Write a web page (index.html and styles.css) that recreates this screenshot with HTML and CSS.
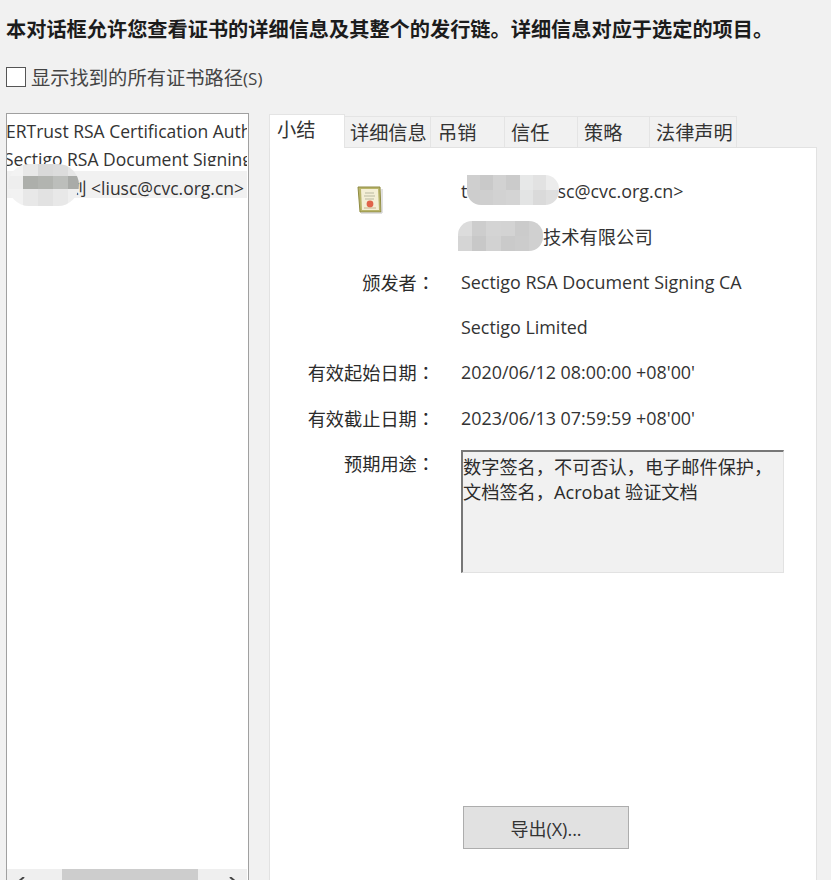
FILE: index.html
```html
<!DOCTYPE html>
<html lang="zh-CN">
<head>
<meta charset="utf-8">
<title>证书查看程序</title>
<link rel="stylesheet" href="styles.css">
</head>
<body>
<div class="dialog">
  <p class="intro">本对话框允许您查看证书的详细信息及其整个的发行链。详细信息对应于选定的项目。</p>
  <label class="check-row"><span class="checkbox"></span><span class="check-text">显示找到的所有证书路径<small>(S)</small></span></label>
  <div class="main">
    <div class="tree">
      <div class="tree-items">
        <div class="tree-item item-one">ERTrust RSA Certification Authority</div>
        <div class="tree-item item-two">Sectigo RSA Document Signing CA</div>
        <div class="tree-item item-selected"><span class="mosaic mosaic-tree"><i></i><i></i><i></i><i></i><i></i><i></i><i></i><i></i><i></i><i></i><i></i><i></i><i></i><i></i><i></i></span><span class="sel-text">刘 &lt;liusc@cvc.org.cn&gt;</span></div>
      </div>
      <div class="hscroll">
        <svg class="arrow arrow-left" viewBox="0 0 12 12" width="12" height="12"><path d="M8 0 L2 5" fill="none" stroke="#444" stroke-width="2"/></svg>
        <div class="thumb"></div>
        <svg class="arrow arrow-right" viewBox="0 0 12 12" width="12" height="12"><path d="M4 0 L10 5" fill="none" stroke="#444" stroke-width="2"/></svg>
      </div>
    </div>
    <div class="details">
      <div class="tabs">
        <div class="tab active">小结</div>
        <div class="tab t2">详细信息</div>
        <div class="tab t3">吊销</div>
        <div class="tab t4">信任</div>
        <div class="tab t5">策略</div>
        <div class="tab t6">法律声明</div>
      </div>
      <div class="panel">
        <svg class="cert" viewBox="0 0 28 30" width="28" height="30">
          <path d="M2 2 H24 L25 27 H4 Z" fill="#b9b56a" stroke="#8f8b42" stroke-width="1"/>
          <path d="M5 4 H22 L23 25 H6 Z" fill="#f4efd6"/>
          <path d="M9 8 H18 M8 11 H19 M9 14 H18" stroke="#b9b9a0" stroke-width="1"/>
          <circle cx="14" cy="19" r="3.4" fill="#e0644a"/>
          <path d="M8 23 H20" stroke="#c9b48e" stroke-width="1"/>
          <path d="M5 28 H26 V4" fill="none" stroke="#c4c4c4" stroke-width="1"/>
        </svg>
        <dl class="fields">
          <dt></dt>
          <dd class="masked"><span class="mosaic mosaic-name"><i></i><i></i><i></i><i></i><i></i><i></i><i></i><i></i><i></i><i></i><i></i><i></i><i></i><i></i></span>t<span class="name-rest">sc@cvc.org.cn&gt;</span></dd>
          <dt></dt>
          <dd class="masked"><span class="mosaic mosaic-org"><i></i><i></i><i></i><i></i><i></i><i></i><i></i><i></i><i></i><i></i><i></i><i></i></span><span class="org-rest">技术有限公司</span></dd>
          <dt>颁发者<span class="colon" lang="zh-Hant">：</span></dt>
          <dd>Sectigo RSA Document Signing CA</dd>
          <dt></dt>
          <dd>Sectigo Limited</dd>
          <dt>有效起始日期<span class="colon" lang="zh-Hant">：</span></dt>
          <dd>2020/06/12 08:00:00 +08'00'</dd>
          <dt>有效截止日期<span class="colon" lang="zh-Hant">：</span></dt>
          <dd>2023/06/13 07:59:59 +08'00'</dd>
          <dt class="usage-label">预期用途<span class="colon" lang="zh-Hant">：</span></dt>
          <dd class="usage-cell"><div class="usage">数字签名，不可否认，电子邮件保护，<br>文档签名，Acrobat 验证文档</div></dd>
        </dl>
        <button class="export" type="button">导出(X)...</button>
      </div>
    </div>
  </div>
</div>
</body>
</html>
```
FILE: styles.css
```css
* { box-sizing: border-box; }
html, body { margin: 0; height: 100%; overflow: hidden; background: #fff; }
body {
  color: #2b2b2b;
  font-family: "Open Sans", "Noto Sans CJK SC", sans-serif;
  font-size: 17.9px;
}
.dialog {
  width: 831px;
  height: 880px;
  background: #f1f1f1;
  padding: 15px 0 0 6px;
  display: flex;
  flex-direction: column;
}
.intro {
  margin: 0;
  font-family: "Noto Sans CJK SC", sans-serif;
  font-size: 20.2px;
  line-height: 28px;
  font-weight: 700;
  color: #1c1c1c;
  white-space: nowrap;
}
.check-row { display: flex; align-items: center; gap: 5px; margin-top: 22px; height: 24px; }
.checkbox { width: 20px; height: 20px; background: #fff; border: 1.5px solid #555; }
.check-text { font-family: "Noto Sans CJK SC", sans-serif; font-size: 19.3px; color: #444; }
.check-text small { font-family: "Open Sans", sans-serif; font-size: 17px; }
.main { display: flex; margin-top: 24px; flex: 1; min-height: 0; }
.tree {
  width: 243px;
  background: #fff;
  border: 1px solid #a0a0a0;
  border-width: 1.5px 1.5px 0 1.5px;
  display: flex;
  flex-direction: column;
  overflow: hidden;
}
.tree-items { flex: 1; padding-top: 3px; overflow: hidden; }
.tree-item { font-size: 17.5px; white-space: nowrap; position: relative; color: #333; }
.item-one { height: 28px; line-height: 28px; margin-left: -1px; margin-right: 1px; overflow: hidden; }
.item-two { height: 21px; line-height: 28px; margin-left: -3px; margin-right: 1px; margin-bottom: 5px; overflow: hidden; }
.item-selected { background: #f1f1f1; height: 27px; line-height: 34px; margin-right: 1px; }
.sel-text { margin-left: 62px; }
.mosaic { position: absolute; display: grid; overflow: hidden; z-index: 1; }
.mosaic i { display: block; }
.mosaic-tree {
  left: 1px; top: -7px; width: 71px; height: 42px;
  grid-template-columns: 15px 15px 15px 15px 11px;
  grid-template-rows: 12px 13px 17px;
  border-radius: 22px;
}
.mosaic-tree i:nth-child(1) { background: #f3f3f3; }
.mosaic-tree i:nth-child(2) { background: #e8e8e8; }
.mosaic-tree i:nth-child(3) { background: #d9d9d9; }
.mosaic-tree i:nth-child(4) { background: #dcdcdc; }
.mosaic-tree i:nth-child(5) { background: #e6e6e6; }
.mosaic-tree i:nth-child(6) { background: #eeeeee; }
.mosaic-tree i:nth-child(7) { background: #adafab; }
.mosaic-tree i:nth-child(8) { background: #b2b4b0; }
.mosaic-tree i:nth-child(9) { background: #bcbebb; }
.mosaic-tree i:nth-child(10) { background: #a9aba8; }
.mosaic-tree i:nth-child(11) { background: #f2f2f2; }
.mosaic-tree i:nth-child(12) { background: #e8e8e8; }
.mosaic-tree i:nth-child(13) { background: #e2e2e2; }
.mosaic-tree i:nth-child(14) { background: #e8e8e8; }
.mosaic-tree i:nth-child(15) { background: #efefef; }
.hscroll {
  height: 11px;
  flex: none;
  background: #efefef;
  display: flex;
  align-items: flex-start;
  justify-content: space-between;
  position: relative;
  margin-right: 1px;
  overflow: hidden;
}
.arrow { display: block; margin-top: 8px; flex: none; }
.arrow-left { margin-left: 9px; }
.arrow-right { margin-right: 9px; }
.thumb { position: absolute; left: 55px; width: 136px; top: 0; bottom: 0; background: #cdcdcd; }
.details { flex: 1; margin-left: 20px; margin-right: 14px; display: flex; flex-direction: column; min-width: 0; }
.tabs { display: flex; align-items: flex-end; height: 34px; flex: none; position: relative; z-index: 2; }
.tab {
  font-family: "Noto Sans CJK SC", sans-serif;
  font-size: 19.2px;
  height: 31px;
  line-height: 30px;
  background: #f1f1f1;
  border: 1px solid #e4e4e4;
  border-left: 0;
  border-bottom: 0;
  color: #333;
  white-space: nowrap;
}
.tab.active { width: 76px; height: 34px; background: #fff; border-left: 1px solid #e4e4e4; margin-bottom: -1px; line-height: 28px; padding-left: 7px; }
.t2 { width: 86px; padding-left: 5px; }
.t3 { width: 74px; padding-left: 7px; }
.t4 { width: 73px; padding-left: 6px; }
.t5 { width: 72px; padding-left: 6px; }
.t6 { width: 87px; padding-left: 6px; }
.panel { flex: 1; background: #fff; border: 1px solid #e2e2e2; border-bottom: 0; position: relative; display: flex; flex-direction: column; min-height: 0; }
.cert { position: absolute; left: 86px; top: 37px; filter: blur(0.3px); }
.fields {
  margin: 20.5px 0 0;
  display: grid;
  grid-template-columns: 165px 1fr;
  grid-auto-rows: 45.3px;
  align-items: center;
}
.fields dt { text-align: right; margin: 0; font-family: "Noto Sans CJK SC", sans-serif; font-size: 18.2px; }
.colon { font-family: "Noto Sans CJK TC", sans-serif; }
.fields dd { margin: 0 0 0 26px; white-space: nowrap; position: relative; color: #333; }
.usage-label { align-self: start; padding-top: 10px; }
.usage-cell { align-self: start; }
.usage {
  width: 323px; height: 123px;
  margin-top: 10px;
  padding: 3px 0 0;
  background: #f1f1f1;
  border-top: 2px solid #777;
  border-left: 2px solid #777;
  border-right: 1px solid #e2e2e2;
  border-bottom: 1px solid #e2e2e2;
  line-height: 25px;
  font-size: 18.2px;
  color: #2b2b2b;
}
.masked { height: 100%; display: flex; align-items: center; }
.mosaic-name { left: 6px; top: 6px; width: 92px; height: 30px; grid-template-columns: repeat(7, 1fr); border-radius: 0 14px 14px 14px; }
.mosaic-name i:nth-child(1) { background: #cfcfcf; } .mosaic-name i:nth-child(2) { background: #c9c9c9; }
.mosaic-name i:nth-child(3) { background: #d2d2d2; } .mosaic-name i:nth-child(4) { background: #cbcbcb; }
.mosaic-name i:nth-child(5) { background: #e7e8e8; } .mosaic-name i:nth-child(6) { background: #e2e2e2; }
.mosaic-name i:nth-child(7) { background: #ececec; } .mosaic-name i:nth-child(8) { background: #cdcdcd; }
.mosaic-name i:nth-child(9) { background: #cfcfcf; } .mosaic-name i:nth-child(10) { background: #d2d2d2; }
.mosaic-name i:nth-child(11) { background: #d4d4d4; } .mosaic-name i:nth-child(12) { background: #e3e4e4; }
.mosaic-name i:nth-child(13) { background: #dadada; } .mosaic-name i:nth-child(14) { background: #dfdfdf; }
.name-rest { margin-left: 90px; }
.mosaic-org { left: -3px; top: 7px; width: 85px; height: 30px; grid-template-columns: repeat(6, 1fr); border-radius: 14px 14px 14px 0; }
.mosaic-org i:nth-child(1) { background: #dcdcdc; } .mosaic-org i:nth-child(2) { background: #cdcdcd; }
.mosaic-org i:nth-child(3) { background: #d4d4d4; } .mosaic-org i:nth-child(4) { background: #d3d3d3; }
.mosaic-org i:nth-child(5) { background: #cbcbcb; } .mosaic-org i:nth-child(6) { background: #d0d0d0; }
.mosaic-org i:nth-child(7) { background: #d5d5d5; } .mosaic-org i:nth-child(8) { background: #c8c8c8; }
.mosaic-org i:nth-child(9) { background: #d2d2d2; } .mosaic-org i:nth-child(10) { background: #cacaca; }
.mosaic-org i:nth-child(11) { background: #cccccc; } .mosaic-org i:nth-child(12) { background: #d0d0d0; }
.org-rest { margin-left: 82px; font-size: 18.3px; }
.export {
  position: absolute;
  left: 193px;
  top: 658px;
  width: 166px;
  height: 43px;
  background: #e1e1e1;
  border: 1px solid #adadad;
  border-radius: 0;
  font-family: "Open Sans", "Noto Sans CJK SC", sans-serif;
  font-size: 18px;
  color: #333;
}
```
